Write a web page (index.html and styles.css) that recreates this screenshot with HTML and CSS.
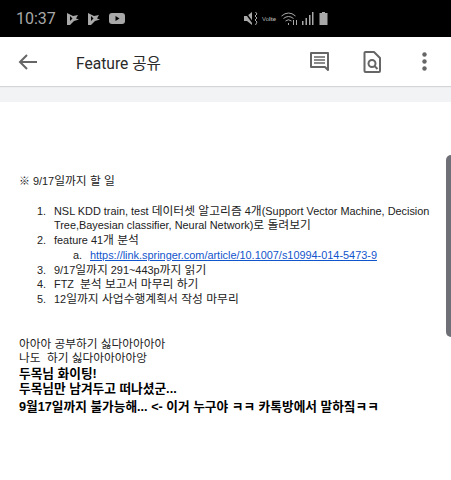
FILE: index.html
```html
<!DOCTYPE html>
<html lang="ko">
<head>
<meta charset="utf-8">
<title>Feature 공유</title>
<link rel="stylesheet" href="styles.css">
</head>
<body>
<header class="status">
  <span class="time">10:37</span>
  <svg class="ni" width="12" height="12" viewBox="0 0 12 12"><path d="M0 0l6 3 5-1-2 3.500 3 1-5 1.500-4 4H0z" fill="#a8a8a8"/><path d="M3 3l2.500 2.500L3 8z" fill="#000"/></svg>
  <svg class="ni" width="12" height="12" viewBox="0 0 12 12"><path d="M0 0l6 3 5-1-2 3.500 3 1-5 1.500-4 4H0z" fill="#a8a8a8"/><path d="M3 3l2.500 2.500L3 8z" fill="#000"/></svg>
  <svg class="yt" width="16" height="11" viewBox="0 0 16 11"><rect width="16" height="11" rx="3" fill="#a8a8a8"/><path d="M6.500 3l4 2.500-4 2.500z" fill="#000"/></svg>
  <span class="spacer"></span>
  <svg class="mute" width="15" height="13" viewBox="0 0 15 13"><path d="M0 4h3l5-4v13L3 9H0z" fill="#a8a8a8"/><path d="M1 0l8 11" stroke="#000" stroke-width="1.500"/><path d="M11.500 0l1.500 2-2 2 2 2-2 2 2 2-1.500 3" fill="none" stroke="#a8a8a8"/></svg>
  <span class="lte">Vo<b>lte</b></span>
  <svg class="wifi" width="17" height="13" viewBox="0 0 17 13" fill="none" stroke="#a8a8a8"><path d="M.5 4q7-6 14 0M2.500 6.500q5-4 10 0M4.500 9q3-2.500 6 0"/><path d="M7.500 11v2M12.500 13V8M15.500 8v5"/></svg>
  <svg class="sig" width="12" height="13" viewBox="0 0 12 13" fill="#a8a8a8"><rect x="0" y="9" width="1.500" height="4"/><rect x="3.500" y="6" width="1.500" height="7"/><rect x="7" y="3" width="1.500" height="10"/><rect x="10" y="0" width="1.500" height="13"/></svg>
  <svg class="bat" width="9" height="13" viewBox="0 0 9 13"><path d="M3 0h3v1h2.500v12H.5V1H3z" fill="#a8a8a8"/></svg>
</header>
<nav class="toolbar">
  <svg class="back" width="20" height="16" viewBox="0 0 20 16" fill="none" stroke="#666" stroke-width="2"><path d="M19 8H2M9 1L2 8l7 7"/></svg>
  <h1 class="title">Feature 공유</h1>
  <span class="spacer"></span>
  <svg class="comment" width="19" height="19" viewBox="0 0 19 19"><path d="M1 1h17v17l-3-3H1z" fill="none" stroke="#666" stroke-width="2" stroke-linejoin="round"/><path d="M4 5h11M4 8h11M4 11h11" stroke="#666" stroke-width="1.600"/></svg>
  <svg class="find" width="18" height="22" viewBox="0 0 18 22" fill="none" stroke="#666" stroke-width="2"><path d="M2.500 1H11l6 6v13a1 1 0 0 1-1 1H2.500a1 1 0 0 1-1-1V2a1 1 0 0 1 1-1z" stroke-linejoin="round"/><circle cx="9" cy="12.500" r="3.500"/><path d="M11.500 15l3 3"/></svg>
  <svg class="more" width="5" height="19" viewBox="0 0 5 19" fill="#666"><circle cx="2.500" cy="2.500" r="2.200"/><circle cx="2.500" cy="9.500" r="2.200"/><circle cx="2.500" cy="16.500" r="2.200"/></svg>
</nav>
<div class="strip"></div>
<main class="doc">
  <p class="heading">※ 9/17<span class="ko">일까지 할 일</span></p>
  <ol class="tasks">
    <li>NSL KDD train, test <span class="ko">데이터셋 알고리즘</span> 4<span class="ko">개</span>(Support Vector Machine, Decision Tree,Bayesian classifier, Neural Network)<span class="ko">로 돌려보기</span></li>
    <li>feature 41<span class="ko">개 분석</span>
      <ol class="sub"><li><a href="#">https://link.springer.com/article/10.1007/s10994-014-5473-9</a></li></ol>
    </li>
    <li>9/17<span class="ko">일까지</span> 291~443p<span class="ko">까지 읽기</span></li>
    <li>FTZ&nbsp; <span class="ko">분석 보고서 마무리 하기</span></li>
    <li>12<span class="ko">일까지 사업수행계획서 작성 마무리</span></li>
  </ol>
  <p class="line first">아아아 공부하기 싫다아아아아</p>
  <p class="line">나도&nbsp; 하기 싫다아아아아앙</p>
  <p class="line strong lead">두목님 화이팅!</p>
  <p class="line strong">두목님만 남겨두고 떠나셨군...</p>
  <p class="line strong last">9월17일까지 불가능해... &lt;- 이거 누구야 ㅋㅋ 카톡방에서 말하짘ㅋㅋ</p>
</main>
<div class="scroll"></div>
</body>
</html>
```
FILE: styles.css
```css
* { box-sizing: border-box; }
html, body { margin: 0; padding: 0; }
body {
  width: 451px;
  height: 480px;
  overflow: hidden;
  background: #fff;
  position: relative;
  font-family: "Liberation Sans", "Noto Sans CJK KR", sans-serif;
}
.status {
  height: 37px;
  background: #000;
  display: flex;
  align-items: center;
  padding: 0 123px 0 16px;
  color: #a8a8a8;
}
.time { font: 16px Roboto, sans-serif; margin-right: 11px; }
.ni { margin-right: 9px; }
.spacer { flex: 1; }
.mute { margin-right: 3px; }
.lte { font: 6px "Liberation Sans", sans-serif; margin-right: 5px; white-space: nowrap; }
.lte b { font-weight: 700; }
.wifi { margin-right: 4px; }
.sig { margin-right: 5px; }
.toolbar {
  height: 49px;
  background: #fff;
  display: flex;
  align-items: center;
  padding: 0 24px 0 18px;
  box-shadow: 0 1px 1px rgba(0,0,0,.12);
  position: relative;
}
.title {
  margin: 0 0 0 38px;
  font: 400 15.600px Roboto, "Noto Sans CJK KR", sans-serif;
  color: #2a2a2a;
}
.comment { margin-right: 34px; }
.find { margin-right: 41px; }
.strip { height: 16px; background: #f1f3f4; }
.doc {
  padding: 72px 0 0 19px;
  font-size: 10.900px;
  line-height: 14.700px;
  color: #222;
}
.ko { font-size: 11.800px; line-height: 1; }
.heading { margin: 0 0 15px; }
.tasks { margin: 0; padding: 0 12px 0 30px; }
.tasks > li { padding-left: 5px; }
.sub { list-style: lower-alpha; margin: 0; padding-left: 31px; }
.sub > li { padding-left: 5px; }
.sub a { color: #1155cc; }
.line { margin: 0; font-size: 11.700px; }
.first { margin-top: 30px; }
.strong { font-weight: 700; font-size: 12.700px; color: #000; }
.lead { margin-top: 1px; }
.last { margin-top: 4px; }
.scroll {
  position: absolute;
  left: 446px;
  top: 155px;
  width: 5px;
  height: 182px;
  background: #6f6f78;
  border-radius: 5px 0 0 5px;
}
```
